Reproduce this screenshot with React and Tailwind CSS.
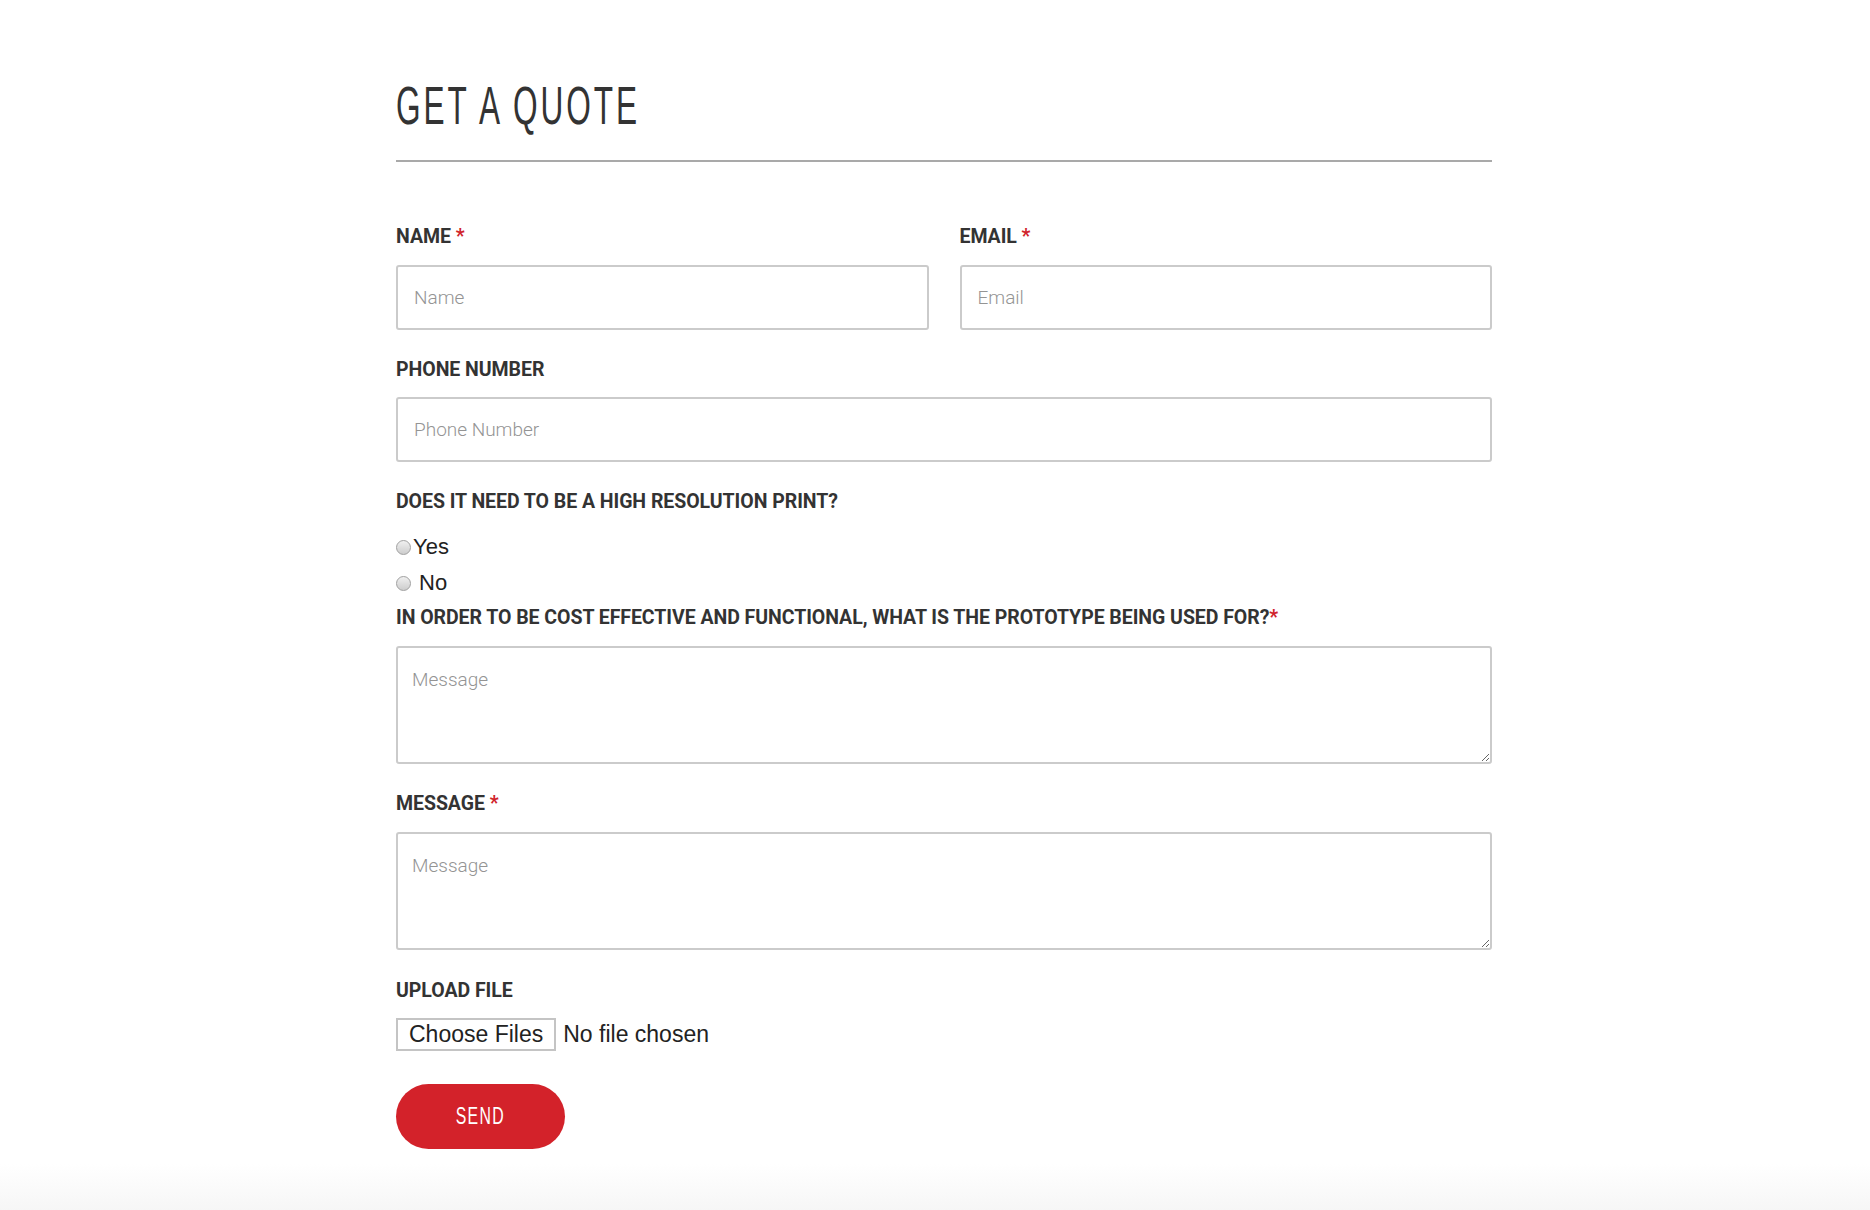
import React, { useState } from 'react';

const Label = ({ children, required, className = '' }) => (
  <label className={`block font-['Roboto',sans-serif] text-[19.5px] leading-5 font-bold text-[#333] tracking-[-0.05px] ${className}`}>
    {children}
    {required && <span className="text-[#d0232b]"> *</span>}
  </label>
);

const inputClass =
  "block w-full h-[65px] px-4 border-2 border-[#cbcbcb] rounded-[3px] bg-white font-['Roboto',sans-serif] font-light text-[19px] text-[#333] placeholder:text-[#949494] outline-none";

const textareaClass =
  "block w-full h-[118px] px-[14px] py-[20px] border-2 border-[#cbcbcb] rounded-[3px] bg-white font-['Roboto',sans-serif] font-light text-[19px] leading-6 text-[#333] placeholder:text-[#949494] outline-none";

const Radio = ({ label, checked, onChange, gap }) => (
  <label className="flex items-center h-9 cursor-pointer">
    <span className="flex-none w-[15px] h-[15px] rounded-full border border-[#a0a0a0] bg-gradient-to-b from-[#f0f0f0] to-[#cdcdcd] mt-[3px] flex items-center justify-center">
      {checked && <span className="w-[6px] h-[6px] rounded-full bg-[#333]" />}
    </span>
    <input type="radio" className="hidden" checked={checked} onChange={onChange} />
    <span className={`font-['Liberation_Sans',Arial,sans-serif] text-[22px] text-[#222] ${gap}`}>{label}</span>
  </label>
);

const App = () => {
  const [name, setName] = useState('');
  const [email, setEmail] = useState('');
  const [phone, setPhone] = useState('');
  const [hiRes, setHiRes] = useState('');
  const [usage, setUsage] = useState('');
  const [message, setMessage] = useState('');

  return (
    <div className="min-h-[1210px] bg-white flex flex-col">
      <div className="flex-1 pl-[396px] pt-[75px] pb-[15px]">
        <div className="w-[1096px]">
          <h1 className="font-['Liberation_Sans',sans-serif] text-[54px] leading-[60px] font-normal text-[#333] tracking-[5px] origin-left scale-x-[0.585] whitespace-nowrap">
            GET A QUOTE
          </h1>
          <div className="mt-[25px] h-[2px] bg-[#a9a9a9]" />

          <form className="mt-[65px]" onSubmit={(e) => e.preventDefault()}>
            <div className="grid grid-cols-2 gap-x-[31px]">
              <div>
                <Label required>NAME</Label>
                <input
                  type="text"
                  placeholder="Name"
                  value={name}
                  onChange={(e) => setName(e.target.value)}
                  className={`mt-[18px] ${inputClass}`}
                />
              </div>
              <div>
                <Label required>EMAIL</Label>
                <input
                  type="email"
                  placeholder="Email"
                  value={email}
                  onChange={(e) => setEmail(e.target.value)}
                  className={`mt-[18px] ${inputClass}`}
                />
              </div>
            </div>

            <Label className="mt-[30px]">PHONE NUMBER</Label>
            <input
              type="text"
              placeholder="Phone Number"
              value={phone}
              onChange={(e) => setPhone(e.target.value)}
              className={`mt-[17px] ${inputClass}`}
            />

            <Label className="mt-[30px]">DOES IT NEED TO BE A HIGH RESOLUTION PRINT?</Label>
            <div className="mt-[16px]">
              <Radio label="Yes" gap="ml-[2px]" checked={hiRes === 'yes'} onChange={() => setHiRes('yes')} />
              <Radio label="No" gap="ml-[8px]" checked={hiRes === 'no'} onChange={() => setHiRes('no')} />
            </div>

            <label className="block mt-[8px] font-['Roboto',sans-serif] text-[19.5px] leading-5 font-bold text-[#333] tracking-[-0.05px]">
              IN ORDER TO BE COST EFFECTIVE AND FUNCTIONAL, WHAT IS THE PROTOTYPE BEING USED FOR?
              <span className="text-[#d0232b]">*</span>
            </label>
            <textarea
              placeholder="Message"
              value={usage}
              onChange={(e) => setUsage(e.target.value)}
              className={`mt-[18px] ${textareaClass}`}
            />

            <Label required className="mt-[30px]">MESSAGE</Label>
            <textarea
              placeholder="Message"
              value={message}
              onChange={(e) => setMessage(e.target.value)}
              className={`mt-[18px] ${textareaClass}`}
            />

            <Label className="mt-[31px]">UPLOAD FILE</Label>
            <div className="mt-[16px] flex items-center">
              <button
                type="button"
                className="h-[33px] px-[11px] border-2 border-[#c4c4c4] bg-white font-['Liberation_Sans',Arial,sans-serif] text-[23px] leading-none text-[#222]"
              >
                Choose Files
              </button>
              <span className="ml-[7px] font-['Liberation_Sans',Arial,sans-serif] text-[23px] text-[#222]">No file chosen</span>
            </div>

            <button
              type="submit"
              className="mt-[32px] w-[169px] h-[65px] rounded-full bg-[#d3222a] text-white flex items-center justify-center"
            >
              <span className="inline-block font-['Liberation_Sans',sans-serif] text-[24px] tracking-[2px] scale-x-[0.66]">SEND</span>
            </button>
          </form>
        </div>
      </div>
      <div className="h-[48px] bg-gradient-to-b from-white to-[#f6f6f6]" />
    </div>
  );
};

export default App;
